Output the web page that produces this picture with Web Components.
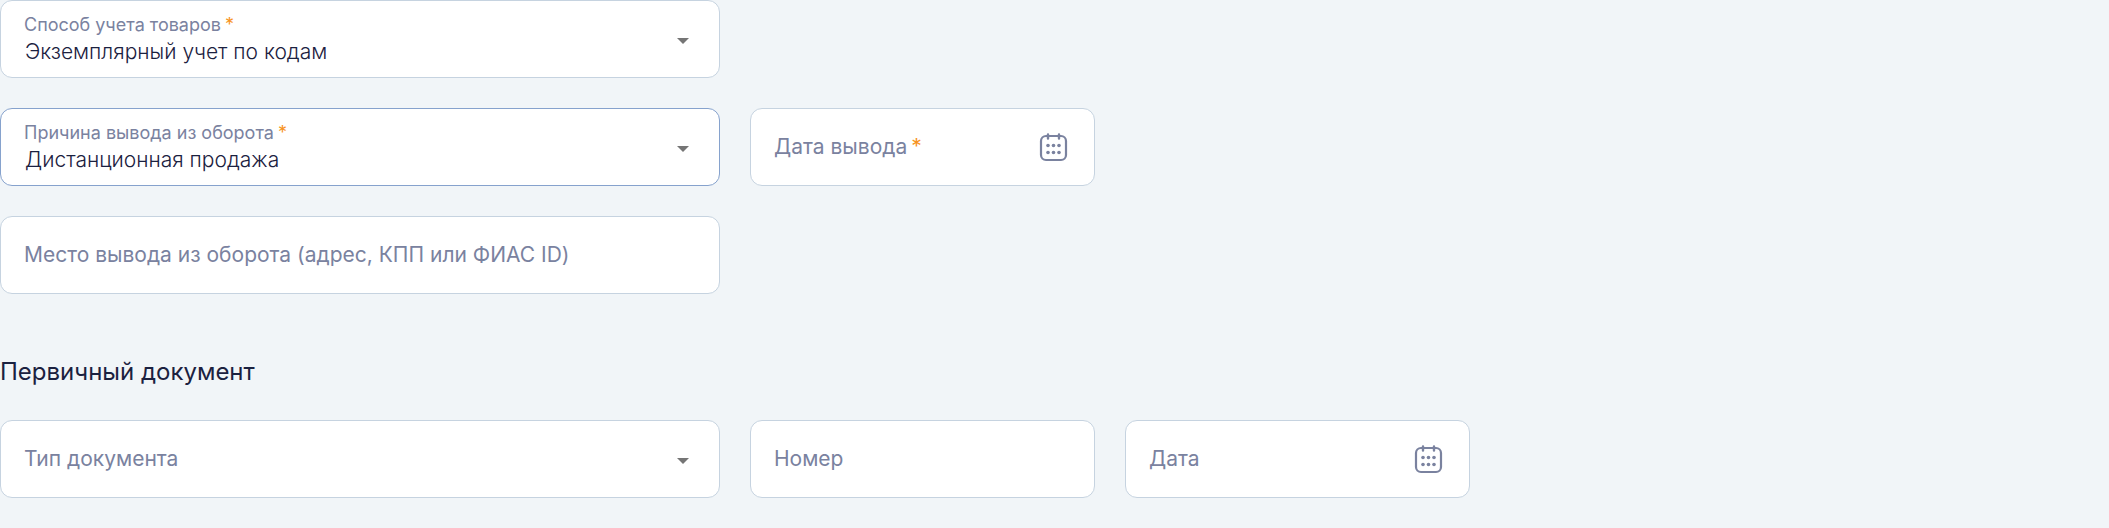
<!DOCTYPE html>
<html lang="ru">
<head>
<meta charset="utf-8">
<meta name="viewport" content="width=device-width, initial-scale=1">
<title>Вывод из оборота</title>
<style>
  body {
    margin: 0;
    background: #f1f5f8;
    color: #1b2140;
    font-family: Inter, "Liberation Sans", sans-serif;
  }
</style>
</head>
<body>
<withdrawal-form></withdrawal-form>

<script>
const fieldStyles = `
  :host {
    display: block;
    min-width: 0;
  }
  :host([wide]) {
    grid-column: span 2;
  }
  .field {
    display: grid;
    grid-template-columns: minmax(0, 1fr) auto;
    align-items: center;
    background: #fff;
    border: 1px solid #c6d3e0;
    border-radius: 12px;
  }
  :host([active]) .field {
    border-color: #86a2cd;
  }
  label {
    grid-area: 1 / 1;
    padding-left: 23px;
    color: #7a829f;
    font-size: 21px;
    line-height: 26px;
    white-space: nowrap;
    pointer-events: none;
    z-index: 1;
  }
  .filled label {
    align-self: start;
    padding-top: 11px;
    font-size: 18px;
  }
  .required {
    margin-left: 4px;
    color: #f7931e;
  }
  input, select {
    grid-area: 1 / 1 / 2 / 3;
    box-sizing: border-box;
    width: 100%;
    margin: 0;
    padding: 38px 24px 12px;
    border: 0;
    border-radius: 11px;
    outline: 0;
    background: none;
    appearance: none;
    color: #1b2140;
    font-family: inherit;
    font-size: 21px;
    font-weight: 300;
    line-height: 26px;
    height: auto;
  }
  .icon {
    grid-area: 1 / 2;
    z-index: 1;
  }
  svg {
    display: block;
  }
`;

class FormField extends HTMLElement {
  constructor() {
    super();
    this.attachShadow({ mode: 'open' });
  }

  connectedCallback() {
    this.render();
  }

  control() {
    return `<input id="control" type="text" value="${this.getAttribute('value') || ''}">`;
  }

  icon() {
    return '';
  }

  render() {
    const label = this.getAttribute('label');
    const required = this.hasAttribute('required');
    const filled = this.hasAttribute('value');

    this.shadowRoot.innerHTML = `
      <style>${fieldStyles}</style>
      <div class="field ${filled ? 'filled' : ''}">
        <label for="control">${label}${required ? '<span class="required">*</span>' : ''}</label>
        ${this.control()}
        ${this.icon()}
      </div>
    `;
  }
}

class SelectField extends FormField {
  control() {
    const value = this.getAttribute('value') || '';
    return `<select id="control"><option selected>${value}</option></select>`;
  }

  icon() {
    return `
      <style>
        .arrow {
          padding: 4px 30px 0 0;
          color: #757575;
          pointer-events: none;
        }
      </style>
      <span class="icon arrow">
        <svg width="12" height="6" viewBox="0 0 12 6" aria-hidden="true">
          <path d="M0 0h12L6 6z" fill="currentColor"/>
        </svg>
      </span>
    `;
  }
}

class DateField extends FormField {
  icon() {
    return `
      <style>
        button {
          margin: 0 25px 0 0;
          padding: 0;
          border: 0;
          background: none;
          color: #7a829f;
          cursor: pointer;
        }
      </style>
      <button class="icon" type="button" aria-label="Открыть календарь">
        <svg width="30" height="30" viewBox="0 0 30 30" fill="none" stroke="currentColor" stroke-width="2.2" stroke-linecap="round">
          <rect x="2" y="4" width="25" height="24" rx="5"/>
          <path d="M9 2.5v4M20 2.5v4" stroke-width="2.4"/>
          <g fill="currentColor" stroke="none">
            <circle cx="9" cy="13.5" r="1.8"/>
            <circle cx="14.5" cy="13.5" r="1.8"/>
            <circle cx="20" cy="13.5" r="1.8"/>
            <circle cx="9" cy="20.5" r="1.8"/>
            <circle cx="14.5" cy="20.5" r="1.8"/>
            <circle cx="20" cy="20.5" r="1.8"/>
          </g>
        </svg>
      </button>
    `;
  }
}

class FormRow extends HTMLElement {
  constructor() {
    super();
    this.attachShadow({ mode: 'open' });
    this.shadowRoot.innerHTML = `
      <style>
        :host {
          display: grid;
          grid-template-columns: repeat(4, minmax(0, 1fr));
          gap: 30px;
        }
        @media (max-width: 800px) {
          :host {
            grid-template-columns: repeat(2, minmax(0, 1fr));
          }
        }
      </style>
      <slot></slot>
    `;
  }
}

class WithdrawalForm extends HTMLElement {
  constructor() {
    super();
    this.attachShadow({ mode: 'open' });
    this.shadowRoot.innerHTML = `
      <style>
        :host {
          display: block;
        }
        form {
          display: flex;
          flex-direction: column;
          gap: 30px;
          max-width: 1470px;
          padding-bottom: 30px;
        }
        h2 {
          margin: 30px 0 0;
          font-size: 24px;
          font-weight: 400;
          line-height: 36px;
        }
      </style>
      <form>
        <form-row>
          <select-field wide required label="Способ учета товаров" value="Экземплярный учет по кодам"></select-field>
        </form-row>
        <form-row>
          <select-field wide required active label="Причина вывода из оборота" value="Дистанционная продажа"></select-field>
          <date-field required label="Дата вывода"></date-field>
        </form-row>
        <form-row>
          <text-field wide label="Место вывода из оборота (адрес, КПП или ФИАС ID)"></text-field>
        </form-row>
        <h2>Первичный документ</h2>
        <form-row>
          <select-field wide label="Тип документа"></select-field>
          <text-field label="Номер"></text-field>
          <date-field label="Дата"></date-field>
        </form-row>
      </form>
    `;
  }
}

customElements.define('text-field', class extends FormField {});
customElements.define('select-field', SelectField);
customElements.define('date-field', DateField);
customElements.define('form-row', FormRow);
customElements.define('withdrawal-form', WithdrawalForm);
</script>
</body>
</html>
